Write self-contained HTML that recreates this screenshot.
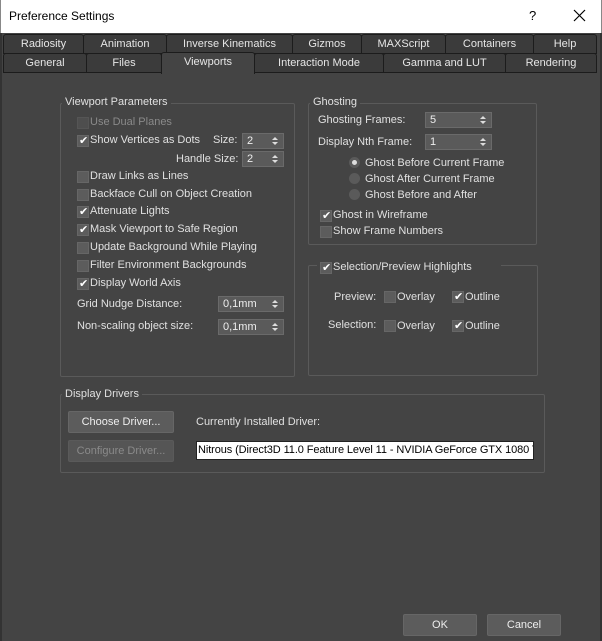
<!DOCTYPE html>
<html><head><style>
*{box-sizing:border-box;margin:0;padding:0}
body{width:602px;height:641px;background:#444;font-family:"Liberation Sans",sans-serif;font-size:11px;color:#e0e0e0;position:relative;overflow:hidden}
.a{position:absolute;white-space:nowrap}
.title{position:absolute;left:0;top:0;width:602px;height:33px;background:#fff;color:#000;font-size:12px;border-left:1px solid #888;border-right:1px solid #888}
.frame{position:absolute;left:0;top:33px;width:602px;height:608px;border-left:2px solid #333;border-right:2px solid #333}
.tab{position:absolute;height:20px;background:#3b3b3b;border:1px solid #1c1c1c;border-radius:3px 3px 0 0;text-align:center;line-height:18px;color:#e6e6e6}
.sel{background:#444;border-bottom:none;height:22px}
.grp{position:absolute;border:1px solid #5a5a5a;border-radius:2px}
.gl{position:absolute;background:#444;padding:0 3px;line-height:13px}
.cb{position:absolute;width:12px;height:12px;background:#5c5c5c;border:1px solid #666}
.cb.on::after{content:"✔";position:absolute;left:1px;top:-2px;font-size:11px;color:#fff}
.cb.dis{background:#4e4e4e;border-color:#555}
.sp{position:absolute;height:16px;background:#5a5a5a;border:1px solid #6a6a6a;color:#eee;padding-left:4px;line-height:14px}
.sp::after{content:"";position:absolute;right:5px;top:3px;width:0;height:0;border-left:3px solid transparent;border-right:3px solid transparent;border-bottom:3px solid #ddd}
.sp::before{content:"";position:absolute;right:5px;top:8px;width:0;height:0;border-left:3px solid transparent;border-right:3px solid transparent;border-top:3px solid #ddd}
.rd{position:absolute;width:11px;height:11px;border-radius:50%;background:#5a5a5a}
.btn{position:absolute;background:#5c5c5c;border:1px solid #666;border-radius:2px;text-align:center;color:#eee}
</style></head><body>
<div class="title"><span class="a" style="left:8px;top:9px">Preference Settings</span><span class="a" style="left:528px;top:8px;font-size:13px">?</span>
<svg class="a" style="left:572px;top:9px" width="13" height="13"><path d="M1 1L12 12M12 1L1 12" stroke="#000" stroke-width="1.2"/></svg></div>
<div class="frame"></div>
<div class="tab" style="left:3px;top:34px;width:81px">Radiosity</div>
<div class="tab" style="left:83px;top:34px;width:84px">Animation</div>
<div class="tab" style="left:166px;top:34px;width:127px">Inverse Kinematics</div>
<div class="tab" style="left:292px;top:34px;width:70px">Gizmos</div>
<div class="tab" style="left:361px;top:34px;width:85px">MAXScript</div>
<div class="tab" style="left:445px;top:34px;width:89px">Containers</div>
<div class="tab" style="left:533px;top:34px;width:64px">Help</div>
<div class="tab" style="left:3px;top:53px;width:84px">General</div>
<div class="tab" style="left:86px;top:53px;width:76px">Files</div>
<div class="tab" style="left:254px;top:53px;width:130px">Interaction Mode</div>
<div class="tab" style="left:383px;top:53px;width:123px">Gamma and LUT</div>
<div class="tab" style="left:505px;top:53px;width:92px">Rendering</div>
<div class="tab sel" style="left:161px;top:52px;width:94px">Viewports</div>

<div class="grp" style="left:60px;top:103px;width:235px;height:274px"></div>
<div class="gl" style="left:62px;top:96px">Viewport Parameters</div>
<div class="cb dis" style="left:77px;top:117px"></div><span class="a" style="left:90px;top:116px;color:#8a8a8a">Use Dual Planes</span>
<div class="cb on" style="left:77px;top:135px"></div><span class="a" style="left:90px;top:134px">Show Vertices as Dots</span>
<span class="a" style="left:213px;top:134px">Size:</span><div class="sp" style="left:242px;top:133px;width:42px">2</div>
<span class="a" style="left:176px;top:153px">Handle Size:</span><div class="sp" style="left:242px;top:151px;width:42px">2</div>
<div class="cb" style="left:77px;top:171px"></div><span class="a" style="left:90px;top:170px">Draw Links as Lines</span>
<div class="cb" style="left:77px;top:189px"></div><span class="a" style="left:90px;top:188px">Backface Cull on Object Creation</span>
<div class="cb on" style="left:77px;top:206px"></div><span class="a" style="left:90px;top:205px">Attenuate Lights</span>
<div class="cb on" style="left:77px;top:224px"></div><span class="a" style="left:90px;top:223px">Mask Viewport to Safe Region</span>
<div class="cb" style="left:77px;top:242px"></div><span class="a" style="left:90px;top:241px">Update Background While Playing</span>
<div class="cb" style="left:77px;top:260px"></div><span class="a" style="left:90px;top:259px">Filter Environment Backgrounds</span>
<div class="cb on" style="left:77px;top:278px"></div><span class="a" style="left:90px;top:277px">Display World Axis</span>
<span class="a" style="left:77px;top:298px">Grid Nudge Distance:</span><div class="sp" style="left:218px;top:296px;width:66px">0,1mm</div>
<span class="a" style="left:77px;top:320px">Non-scaling object size:</span><div class="sp" style="left:218px;top:319px;width:66px">0,1mm</div>

<div class="grp" style="left:308px;top:103px;width:229px;height:142px"></div>
<div class="gl" style="left:310px;top:96px">Ghosting</div>
<span class="a" style="left:318px;top:114px">Ghosting Frames:</span><div class="sp" style="left:425px;top:112px;width:67px">5</div>
<span class="a" style="left:318px;top:136px">Display Nth Frame:</span><div class="sp" style="left:425px;top:134px;width:67px">1</div>
<div class="rd" style="left:349px;top:157px;background:#ddd;border:3px solid #5a5a5a"></div><span class="a" style="left:365px;top:157px">Ghost Before Current Frame</span>
<div class="rd" style="left:349px;top:173px"></div><span class="a" style="left:365px;top:173px">Ghost After Current Frame</span>
<div class="rd" style="left:349px;top:189px"></div><span class="a" style="left:365px;top:189px">Ghost Before and After</span>
<div class="cb on" style="left:320px;top:210px"></div><span class="a" style="left:333px;top:209px">Ghost in Wireframe</span>
<div class="cb" style="left:320px;top:226px"></div><span class="a" style="left:333px;top:225px">Show Frame Numbers</span>

<div class="grp" style="left:308px;top:265px;width:230px;height:111px"></div>
<div class="gl" style="left:317px;top:261px;width:184px;height:14px"></div>
<div class="cb on" style="left:320px;top:262px"></div><span class="a" style="left:333px;top:261px">Selection/Preview Highlights</span>
<span class="a" style="left:334px;top:291px">Preview:</span>
<div class="cb" style="left:384px;top:291px"></div><span class="a" style="left:397px;top:291px">Overlay</span>
<div class="cb on" style="left:452px;top:291px"></div><span class="a" style="left:465px;top:291px">Outline</span>
<span class="a" style="left:328px;top:319px">Selection:</span>
<div class="cb" style="left:384px;top:320px"></div><span class="a" style="left:397px;top:320px">Overlay</span>
<div class="cb on" style="left:452px;top:320px"></div><span class="a" style="left:465px;top:320px">Outline</span>

<div class="grp" style="left:60px;top:394px;width:485px;height:79px"></div>
<div class="gl" style="left:62px;top:388px">Display Drivers</div>
<div class="btn" style="left:68px;top:411px;width:106px;height:22px;line-height:20px">Choose Driver...</div>
<div class="btn" style="left:68px;top:440px;width:106px;height:22px;line-height:20px;color:#8a8a8a;background:#555;border-color:#5a5a5a">Configure Driver...</div>
<span class="a" style="left:196px;top:416px">Currently Installed Driver:</span>
<div class="a" style="left:196px;top:441px;width:338px;height:19px;background:#fff;border:1px solid #222;color:#000;padding-left:1px;line-height:17px;overflow:hidden;letter-spacing:-0.1px">Nitrous (Direct3D 11.0 Feature Level 11 - NVIDIA GeForce GTX 1080 Ti)</div>

<div class="btn" style="left:403px;top:614px;width:74px;height:22px;line-height:20px">OK</div>
<div class="btn" style="left:487px;top:614px;width:74px;height:22px;line-height:20px">Cancel</div>
</body></html>
